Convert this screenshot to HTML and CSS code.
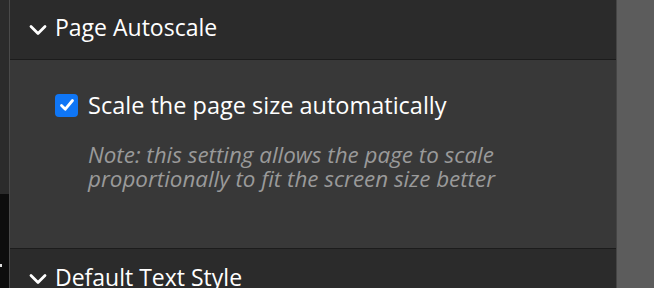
FILE: index.html
```html
<!DOCTYPE html>
<html>
<head>
<meta charset="utf-8">
<link rel="stylesheet" href="styles.css">
</head>
<body>
<div class="app">
  <div class="rail">
    <div class="rail-top"></div>
    <div class="rail-bottom"><span class="dot"></span></div>
  </div>
  <div class="panel">
    <div class="section-head">
      <svg class="chev" width="18" height="12" viewBox="0 0 18 12"><path d="M2 2.5 L9 9.5 L16 2.5" fill="none" stroke="#fff" stroke-width="2.8" stroke-linecap="round" stroke-linejoin="round"/></svg>
      <span class="title">Page Autoscale</span>
    </div>
    <div class="section-body">
      <label class="check-row">
        <span class="box"><svg width="22" height="22" viewBox="0 0 22 22"><path d="M5.5 11.5 L9.3 15.2 L16.5 6.5" fill="none" stroke="#fff" stroke-width="2.8" stroke-linecap="round" stroke-linejoin="round"/></svg></span>
        <span class="label">Scale the page size automatically</span>
      </label>
      <p class="note">Note: this setting allows the page to scale<br>proportionally to fit the screen size better</p>
    </div>
    <div class="section-head">
      <svg class="chev" width="18" height="12" viewBox="0 0 18 12"><path d="M2 2.5 L9 9.5 L16 2.5" fill="none" stroke="#fff" stroke-width="2.8" stroke-linecap="round" stroke-linejoin="round"/></svg>
      <span class="title">Default Text Style</span>
    </div>
  </div>
  <div class="backdrop"></div>
</div>
</body>
</html>
```
FILE: styles.css
```css
html, body { margin: 0; padding: 0; }
body { background: #2b2b2b; font-family: "Open Sans", "Noto Sans", sans-serif; }
.app { display: flex; height: 288px; overflow: hidden; }
.rail { width: 9px; border-right: 1px solid #4a4a4a; display: flex; flex-direction: column; }
.rail-top { height: 194px; background: #2b2b2b; }
.rail-bottom { flex: 1; background: #0d0d0d; position: relative; }
.dot { position: absolute; left: 0; top: 70px; width: 2px; height: 3px; background: #ddd; }
.panel { width: 606px; border-right: 1px solid #454545; background: #2b2b2b; display: flex; flex-direction: column; }
.backdrop { flex: 1; background: #5c5c5c; }
.section-head { height: 60px; box-sizing: border-box; flex: none; display: flex; align-items: center; padding: 0 0 5px 19px; gap: 8px; border-bottom: 1px solid #1c1c1c; background: #2b2b2b; }
.section-head:last-child { border-bottom: none; }
.chev { display: block; margin-top: 5px; }
.title { color: #fff; font-size: 23px; line-height: 28px; }
.section-body { height: 189px; flex: none; background: #383838; border-bottom: 1px solid #1c1c1c; padding: 33px 0 0 45px; box-sizing: border-box; }
.check-row { display: flex; align-items: center; gap: 10px; }
.box { width: 23px; height: 23px; border-radius: 4px; background: #0f76f6; display: flex; align-items: center; justify-content: center; }
.box svg { display: block; }
.label { color: #fff; font-size: 23.5px; line-height: 24px; }
.note { margin: 26px 0 0 33px; color: #9a9a9a; font-style: italic; font-size: 22.4px; line-height: 24px; white-space: nowrap; }
```
